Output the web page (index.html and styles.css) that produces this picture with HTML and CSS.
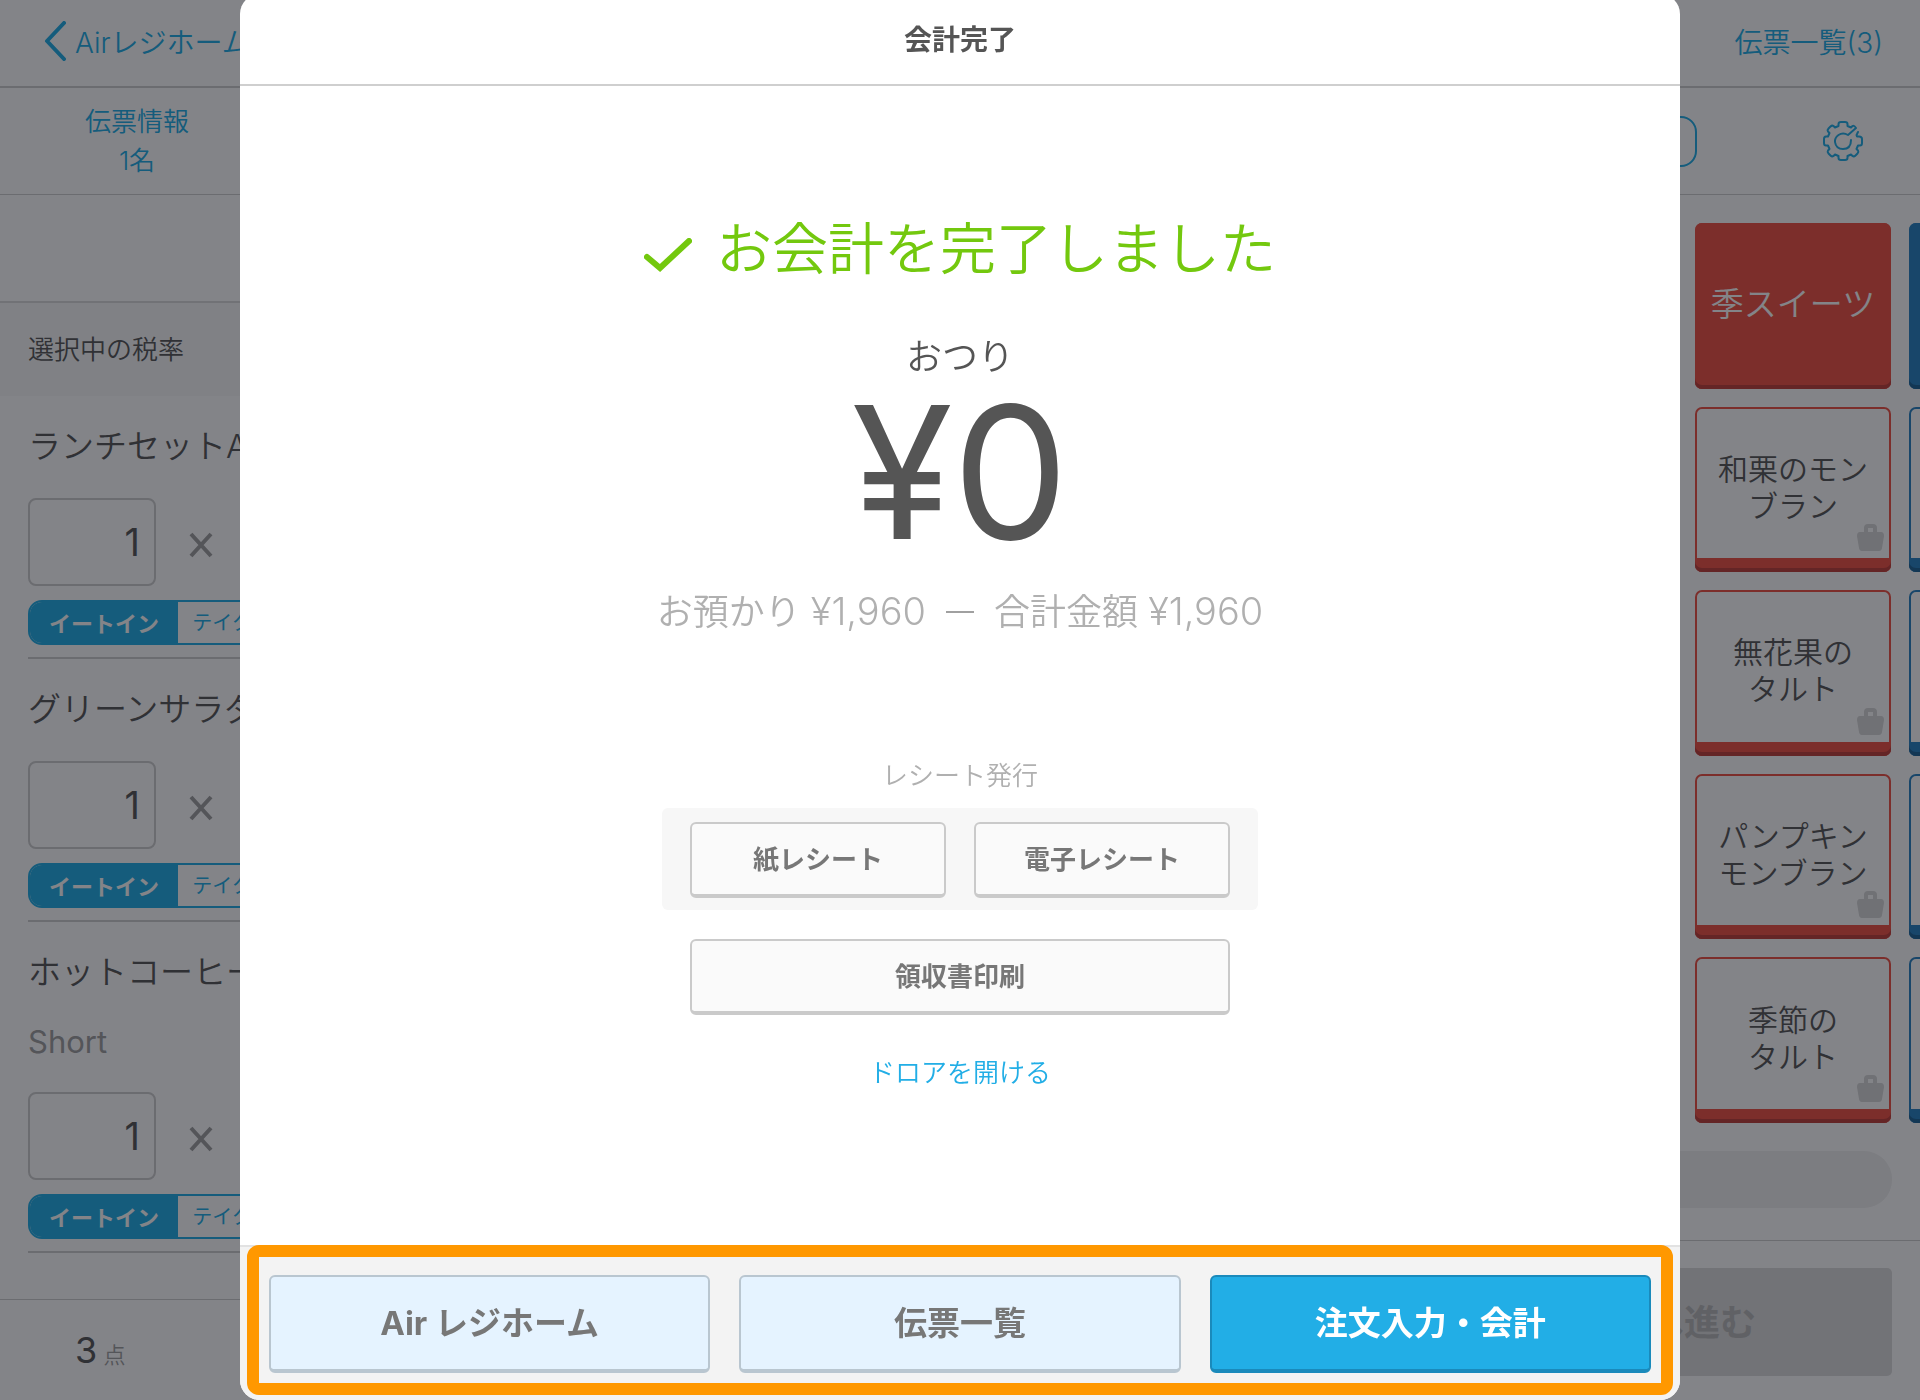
FILE: index.html
```html
<!DOCTYPE html>
<html lang="ja">
<head>
    <meta charset="UTF-8">
    <meta name="viewport" content="width=device-width, initial-scale=1.0">
    <title>会計完了 - Airレジ</title>
    <link rel="stylesheet" href="styles.css">
</head>
<body>
    <!-- Icons used more than once -->
    <svg class="sprite" aria-hidden="true">
        <symbol id="icon-times" viewBox="0 0 24 26">
            <path d="M2 2 L22 24 M22 2 L2 24" fill="none" stroke="currentColor" stroke-width="4"/>
        </symbol>
        <symbol id="icon-bag" viewBox="0 0 27 27">
            <path d="M7 8 V4 Q7 0 11 0 H16 Q20 0 20 4 V8 H24 Q27 8 27 12 L25 24 Q24.500 27 22 27 H5 Q2.500 27 2 24 L0 12 Q0 8 3 8 Z M11 8 H16 V4 H11 Z" fill="currentColor" fill-rule="evenodd"/>
        </symbol>
    </svg>

    <div class="register">
        <section class="order">
            <header class="bar">
                <a class="back" href="#">
                    <svg class="back-icon" viewBox="0 0 22 40" aria-hidden="true"><path d="M20 2 L3 20 L20 38" fill="none" stroke="currentColor" stroke-width="4" stroke-linecap="round" stroke-linejoin="round"/></svg>
                    Airレジホーム
                </a>
            </header>
            <div class="slip-row">
                <a class="slip-info" href="#">伝票情報<br>1名</a>
            </div>
            <div class="blank-row"></div>
            <div class="tax-row">選択中の税率</div>

            <ul class="items">
                <li class="item">
                    <h3>ランチセットA</h3>
                    <div>
                        <div class="quantity">
                            <input type="text" value="1" aria-label="ランチセットAの数量">
                            <svg class="times" aria-hidden="true"><use href="#icon-times"/></svg>
                        </div>
                        <div class="segment">
                            <button class="active" type="button">イートイン</button>
                            <button type="button">テイクアウト</button>
                        </div>
                    </div>
                </li>
                <li class="item">
                    <h3>グリーンサラダ</h3>
                    <div>
                        <div class="quantity">
                            <input type="text" value="1" aria-label="グリーンサラダの数量">
                            <svg class="times" aria-hidden="true"><use href="#icon-times"/></svg>
                        </div>
                        <div class="segment">
                            <button class="active" type="button">イートイン</button>
                            <button type="button">テイクアウト</button>
                        </div>
                    </div>
                </li>
                <li class="item">
                    <h3>ホットコーヒー</h3>
                    <p class="option">Short</p>
                    <div>
                        <div class="quantity">
                            <input type="text" value="1" aria-label="ホットコーヒーの数量">
                            <svg class="times" aria-hidden="true"><use href="#icon-times"/></svg>
                        </div>
                        <div class="segment">
                            <button class="active" type="button">イートイン</button>
                            <button type="button">テイクアウト</button>
                        </div>
                    </div>
                </li>
            </ul>

            <footer class="count"><span class="count-number">3</span> 点</footer>
        </section>

        <section class="menu">
            <header class="bar bar-right">
                <a href="#">伝票一覧(3)</a>
            </header>
            <div class="tools">
                <button class="tool-button" type="button" aria-label="検索"></button>
                <button class="settings" type="button" aria-label="設定">
                    <svg viewBox="0 0 40 40" aria-hidden="true">
                        <g fill="none" stroke="currentColor" stroke-width="2" stroke-linejoin="round" stroke-linecap="round">
                            <path d="M35 11 L34 13 Q33 14 34 15.500 H36 Q39 15.500 39 18 V22 Q39 24.500 37 24.500 H35 L33.500 28 L35 29.500 Q36 31 34.500 32.500 L32.500 34.500 Q31 36 29.500 35 L28 33.500 L24.500 35 V37 Q24.500 39 22 39 H18 Q15.500 39 15.500 37 V35 L12 33.500 L10.500 35 Q9 36 7.500 34.500 L5.500 32.500 Q4 31 5 29.500 L6.500 28 L5 24.500 H3 Q1 24.500 1 22 V18 Q1 15.500 3 15.500 H5 L6.500 12 L5 10.500 Q4 9 5.500 7.500 L7.500 5.500 Q9 4 10.500 5 L12 6.500 L15.500 5 V3 Q15.500 1 18 1 H22 Q24.500 1 24.500 3 V5 L28 6.500 L29.500 5 Q31 4 33 7 L25 14 Q20 11 15.500 14 Q11.500 17 12 21 Q13 28 20 28 Q28 28 28 19"/>
                        </g>
                    </svg>
                </button>
            </div>

            <div class="products">
                <button class="product category" type="button">季スイーツ</button>
                <button class="product category blue" type="button" aria-label="カテゴリー"></button>
                <button class="product" type="button">和栗のモン<br>ブラン<svg class="bag" aria-hidden="true"><use href="#icon-bag"/></svg></button>
                <button class="product blue" type="button" aria-label="商品"></button>
                <button class="product" type="button">無花果の<br>タルト<svg class="bag" aria-hidden="true"><use href="#icon-bag"/></svg></button>
                <button class="product blue" type="button" aria-label="商品"></button>
                <button class="product" type="button">パンプキン<br>モンブラン<svg class="bag" aria-hidden="true"><use href="#icon-bag"/></svg></button>
                <button class="product blue" type="button" aria-label="商品"></button>
                <button class="product" type="button">季節の<br>タルト<svg class="bag" aria-hidden="true"><use href="#icon-bag"/></svg></button>
                <button class="product blue" type="button" aria-label="商品"></button>
            </div>

            <div class="pager"></div>
            <footer class="checkout">
                <button type="button" disabled>会計へ進む</button>
            </footer>
        </section>
    </div>

    <div class="overlay"></div>

    <div class="dialog" role="dialog" aria-labelledby="dialogTitle">
        <h1 class="dialog-title" id="dialogTitle">会計完了</h1>

        <div class="dialog-body">
            <h2 class="done">
                <svg class="check" viewBox="0 0 48 34" aria-hidden="true"><path d="M3 19 L16 30 L45 3" fill="none" stroke="currentColor" stroke-width="6" stroke-linecap="round" stroke-linejoin="miter"/></svg>
                お会計を完了しました
            </h2>
            <p class="change-label">おつり</p>
            <p class="change">¥0</p>
            <p class="detail">
                <span>お預かり <span class="money">¥1,960</span></span>
                <span class="minus"></span>
                <span>合計金額 <span class="money">¥1,960</span></span>
            </p>

            <p class="receipt-label">レシート発行</p>
            <div class="receipt-box">
                <button class="button" type="button">紙レシート</button>
                <button class="button" type="button">電子レシート</button>
            </div>
            <button class="button invoice" type="button">領収書印刷</button>
            <a class="drawer" href="#">ドロアを開ける</a>
        </div>

        <footer class="dialog-footer">
            <div class="actions">
                <button class="action" type="button">Air レジホーム</button>
                <button class="action" type="button">伝票一覧</button>
                <button class="action primary" type="button">注文入力・会計</button>
            </div>
        </footer>
    </div>
</body>
</html>
```
FILE: styles.css
```css
* {
    box-sizing: border-box;
}

body {
    font-family: Inter, "Noto Sans CJK JP", sans-serif;
    margin: 0;
    background-color: #fff;
    color: #585858;
    overflow: hidden;
}

h1, h2, h3, p, ul {
    margin: 0;
    padding: 0;
    font-weight: normal;
}

a {
    color: #22aee6;
    text-decoration: none;
}

button, input {
    font-family: inherit;
    margin: 0;
    padding: 0;
}

.sprite {
    position: absolute;
    width: 0;
    height: 0;
}

/* Register screen behind the dialog */
.register {
    display: flex;
    justify-content: space-between;
    height: 100vh;
    font-weight: 350;
}

.order {
    display: flex;
    flex-direction: column;
    width: 35%;
}

.bar {
    display: flex;
    align-items: center;
    height: 88px;
    padding: 0 44px 4px;
    border-bottom: 2px solid #cecece;
    font-size: 28px;
}

.back {
    display: flex;
    align-items: center;
    gap: 9px;
}

.back-icon {
    width: 22px;
    height: 40px;
}

.slip-row {
    display: flex;
    align-items: center;
    height: 107px;
    border-bottom: 1px solid #cecece;
}

.slip-info {
    width: 274px;
    text-align: center;
    font-size: 26px;
    line-height: 39px;
}

.blank-row {
    height: 108px;
    border-bottom: 2px solid #dadada;
}

.tax-row {
    height: 93px;
    padding: 0 28px;
    background-color: #f8f8f8;
    font-size: 26px;
    line-height: 93px;
}

.items {
    flex: 1;
    padding-left: 28px;
    list-style: none;
}

.item {
    display: flex;
    flex-direction: column;
    gap: 32px;
    padding: 30px 0 12px;
    border-bottom: 2px solid #cecece;
}

.item h3 {
    font-size: 33px;
    line-height: 40px;
    font-weight: 350;
}

.option {
    font-size: 31px;
    line-height: 36px;
    font-weight: 400;
    color: #a0a0a0;
}

.quantity {
    display: flex;
    align-items: center;
    gap: 33px;
    margin-bottom: 14px;
}

.quantity input {
    width: 128px;
    height: 88px;
    padding-right: 14px;
    border: 2px solid #cecece;
    border-radius: 8px;
    background-color: transparent;
    font-size: 38px;
    text-align: right;
    color: #585858;
}

.times {
    width: 24px;
    height: 26px;
    margin-top: 6px;
    color: #a0a0a0;
}

.segment {
    display: flex;
    width: 300px;
    height: 45px;
    border: 2px solid #22aee6;
    border-radius: 14px;
    overflow: hidden;
}

.segment button {
    flex: 1;
    padding-bottom: 2px;
    border: none;
    background-color: #fff;
    color: #22aee6;
    font-size: 20px;
}

.segment .active {
    background-color: #22aee6;
    color: #fff;
    font-size: 22px;
    font-weight: bold;
}

.count {
    height: 101px;
    padding-left: 75px;
    border-top: 1px solid #cecece;
    font-size: 22px;
    line-height: 101px;
    color: #a0a0a0;
}

.count-number {
    font-size: 36px;
    font-weight: 400;
    color: #585858;
}

.menu {
    display: flex;
    flex-direction: column;
    width: 480px;
    overflow: hidden;
}

.bar-right {
    justify-content: flex-end;
    padding-right: 37px;
}

.tools {
    display: flex;
    align-items: center;
    justify-content: space-between;
    height: 107px;
    padding-right: 57px;
    border-bottom: 1px solid #cecece;
}

.tool-button {
    width: 257px;
    height: 51px;
    border: 2px solid #22aee6;
    border-radius: 16px;
    background-color: transparent;
}

.settings {
    width: 40px;
    height: 40px;
    border: none;
    background-color: transparent;
    color: #22aee6;
}

.settings svg {
    display: block;
    width: 40px;
    height: 40px;
}

.products {
    display: grid;
    grid-template-columns: 196px 196px;
    grid-auto-rows: 1fr;
    gap: 18px;
    flex: 1;
    padding: 28px 0 28px 255px;
}

.product {
    position: relative;
    padding-bottom: 3px;
    border: none;
    border-radius: 7px;
    background: linear-gradient(to top, #f05244 14px, #fff 14px);
    box-shadow: inset 0 -4px 0 #c0403a, inset 0 0 0 2px #f05244;
    color: #585858;
    font-size: 30px;
    line-height: 37px;
    font-weight: 350;
}

.product.blue {
    background: linear-gradient(to top, #2882c2 14px, #fff 14px);
    box-shadow: inset 0 -4px 0 #1f6496, inset 0 0 0 2px #2882c2;
}

.product.category {
    background: #f05244;
    color: #fff;
    font-size: 33px;
}

.product.category.blue {
    background: #2882c2;
}

.bag {
    position: absolute;
    right: 7px;
    bottom: 21px;
    width: 27px;
    height: 27px;
    color: #d8d8d8;
}

.pager {
    height: 57px;
    margin: 0 28px 32px 0;
    border-radius: 28px;
    background-color: #f0f0f0;
}

.checkout {
    padding: 27px 28px 24px 0;
    border-top: 1px solid #cecece;
}

.checkout button {
    display: block;
    width: 100%;
    height: 108px;
    padding-bottom: 4px;
    border: none;
    border-radius: 5px;
    background-color: #dcdcdc;
    color: #b8b8b8;
    font-size: 36px;
    font-weight: bold;
}

.overlay {
    position: fixed;
    inset: 0;
    background-color: rgba(8, 10, 18, 0.5);
}

/* Dialog */
.dialog {
    position: fixed;
    inset: -6px 12.5% 0;
    display: flex;
    flex-direction: column;
    border-radius: 20px;
    background-color: #fff;
    color: #555;
    overflow: hidden;
}

.dialog-title {
    height: 92px;
    border-bottom: 2px solid #cfcfcf;
    font-size: 28px;
    line-height: 92px;
    font-weight: bold;
    text-align: center;
}

.dialog-body {
    display: flex;
    flex: 1;
    flex-direction: column;
    align-items: center;
    padding-top: 123px;
    font-weight: 350;
}

.done {
    display: flex;
    align-items: center;
    gap: 24px;
    color: #73c80e;
    font-size: 56px;
    line-height: 80px;
    font-weight: 350;
}

.check {
    width: 48px;
    height: 34px;
    margin-top: 12px;
}

.dialog-body p {
    font-weight: 350;
}

.change-label {
    margin-top: 46px;
    font-size: 36px;
    line-height: 44px;
}

.dialog-body .change {
    margin-top: 4px;
    font-size: 184px;
    line-height: 178px;
    font-weight: 400;
}

.detail {
    display: flex;
    align-items: center;
    gap: 20px;
    margin-top: 28px;
    color: #b0b0b0;
    font-size: 36px;
    line-height: 44px;
}

.money {
    font-size: 38px;
}

.minus {
    width: 28px;
    height: 2px;
    background-color: #a0a0a0;
}

.receipt-label {
    margin-top: 126px;
    color: #b0b0b0;
    font-size: 26px;
    line-height: 32px;
}

.receipt-box {
    display: flex;
    gap: 28px;
    margin-top: 16px;
    padding: 14px 28px 12px;
    border-radius: 6px;
    background-color: #f7f7f7;
}

.button {
    width: 256px;
    height: 76px;
    padding-bottom: 3px;
    border: 2px solid #cacaca;
    border-bottom-width: 4px;
    border-radius: 6px;
    background-color: #fafafa;
    color: #777;
    font-size: 26px;
    font-weight: bold;
}

.invoice {
    width: 540px;
    margin-top: 29px;
}

.drawer {
    margin-top: 42px;
    font-size: 26px;
    line-height: 32px;
}

.dialog-footer {
    padding: 0 7px 5px;
    background-color: #f3f3f3;
    box-shadow: inset 0 2px 0 #e2e2e2;
}

/* Orange frame around the main buttons */
.actions {
    display: flex;
    gap: 29px;
    padding: 18px 10px 10px;
    border: 12px solid #ff9800;
    border-radius: 12px;
}

.action {
    flex: 1;
    height: 98px;
    padding-bottom: 4px;
    border: 2px solid #b9c6d0;
    border-bottom-width: 4px;
    border-radius: 6px;
    background-color: #e5f3ff;
    color: #777;
    font-size: 33px;
    font-weight: bold;
}

.primary {
    border-color: #1a8abb;
    background-color: #22aee6;
    color: #fff;
}
```
